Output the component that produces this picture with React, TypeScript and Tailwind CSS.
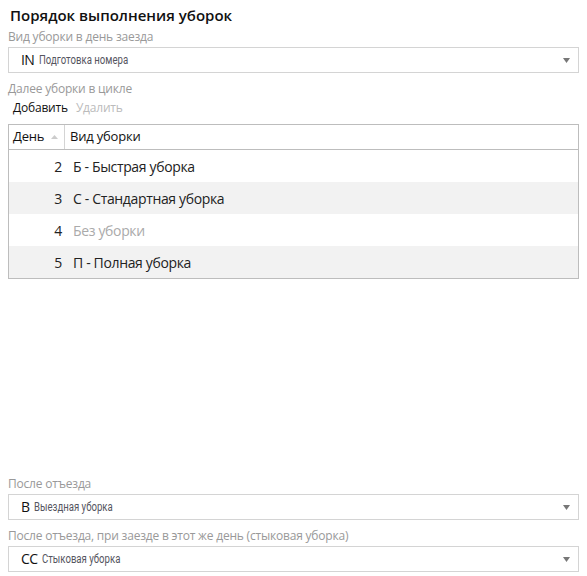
const rows = [
  { day: 2, label: "Б - Быстрая уборка", muted: false },
  { day: 3, label: "С - Стандартная уборка", muted: false },
  { day: 4, label: "Без уборки", muted: true },
  { day: 5, label: "П - Полная уборка", muted: false },
];

function Select({ code, name }: { code: string; name: string }) {
  return (
    <div className="h-[26px] border border-[#d4d4d4] bg-white flex items-center pl-[12px] pr-[6px]">
      <span className="text-[14px] text-[#111] leading-none tracking-[-0.6px]">{code}</span>
      <span className="ml-[5px] inline-block origin-left scale-x-[0.8] whitespace-nowrap text-[12px] text-[#555560] leading-none [font-family:Roboto,sans-serif]">
        {name}
      </span>
      <span className="flex-1" />
      <svg width="7" height="5" viewBox="0 0 7 5" className="mr-[2px]">
        <path d="M0 0h7L3.5 5z" fill="#777" />
      </svg>
    </div>
  );
}

function Label({ children }: { children: React.ReactNode }) {
  return <div className="text-[12px] text-[#999] leading-[16px] tracking-[-0.2px]">{children}</div>;
}

export default function App() {
  return (
    <div className="h-[576px] flex flex-col bg-white pl-[8px] pr-[8px] [font-family:'Open_Sans','Noto_Sans',sans-serif]">
      <h1 className="pl-[2px] pt-[4px] text-[15px] font-semibold text-[#111] leading-[22px]">
        Порядок выполнения уборок
      </h1>

      <div className="mt-[3px]">
        <Label>Вид уборки в день заезда</Label>
        <div className="mt-[2px]">
          <Select code="IN" name="Подготовка номера" />
        </div>
      </div>

      <div className="mt-[8px]">
        <Label>Далее уборки в цикле</Label>
        <div className="flex gap-[8px] text-[12px] leading-[18px] mt-[2px] pl-[5px] tracking-[-0.2px]">
          <span className="text-[#111]">Добавить</span>
          <span className="text-[#bbb]">Удалить</span>
        </div>
      </div>

      <div className="mt-[7px] border border-[#bdbdbd] text-[14px]">
        <div className="flex h-[25px] items-center border-b border-[#bdbdbd] text-[13px] tracking-[-0.2px]">
          <div className="w-[56px] h-full flex items-center border-r border-[#d4d4d4] pl-[4px] text-[#111]">
            День
            <svg width="7" height="4" viewBox="0 0 7 4" className="ml-[7px]">
              <path d="M0 4h7L3.5 0z" fill="#ccc" />
            </svg>
          </div>
          <div className="pl-[5px] text-[#111]">Вид уборки</div>
        </div>
        {rows.map((r, i) => (
          <div
            key={r.day}
            className={`flex h-[32px] items-center tracking-[-0.35px] ${i % 2 === 1 ? "bg-[#f2f2f2]" : "bg-white"}`}
          >
            <div className="w-[56px] text-right pr-[3px] text-[#222]">{r.day}</div>
            <div className={`pl-[8px] ${r.muted ? "text-[#aaa]" : "text-[#222]"}`}>{r.label}</div>
          </div>
        ))}
      </div>

      <div className="flex-1" />

      <div>
        <Label>После отъезда</Label>
        <div className="mt-[2px]">
          <Select code="В" name="Выездная уборка" />
        </div>
      </div>

      <div className="mt-[8px] mb-[4px]">
        <Label>После отъезда, при заезде в этот же день (стыковая уборка)</Label>
        <div className="mt-[2px]">
          <Select code="СС" name="Стыковая уборка" />
        </div>
      </div>
    </div>
  );
}
